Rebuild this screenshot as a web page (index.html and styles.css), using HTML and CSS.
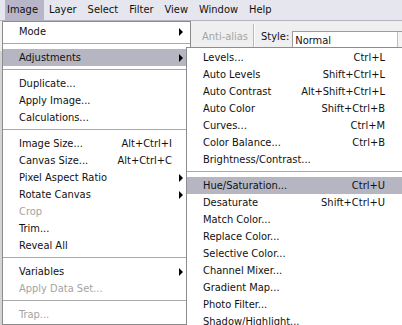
FILE: index.html
```html
<!DOCTYPE html>
<html lang="en">
<head>
    <meta charset="UTF-8">
    <meta name="viewport" content="width=device-width, initial-scale=1.0">
    <title>Image menu</title>
    <link rel="stylesheet" href="styles.css">
</head>
<body>
    <div class="app">
        <!-- top menu bar -->
        <div class="menubar">
            <span class="menubar-item is-open">Image</span>
            <span class="menubar-item">Layer</span>
            <span class="menubar-item">Select</span>
            <span class="menubar-item">Filter</span>
            <span class="menubar-item">View</span>
            <span class="menubar-item">Window</span>
            <span class="menubar-item">Help</span>
        </div>

        <!-- tool options bar (mostly hidden behind the menus) -->
        <div class="options">
            <span class="opt-disabled">Anti-alias</span>
            <span class="opt-sep"></span>
            <span class="opt-label">Style:</span>
            <div class="select">Normal<span class="select-btn"></span></div>
        </div>

        <!-- Image menu -->
        <ul class="menu menu-main">
            <li class="item"><span class="label">Mode</span><span class="sub"></span></li>
            <li class="sep"></li>
            <li class="item is-hover"><span class="label">Adjustments</span><span class="sub"></span></li>
            <li class="sep"></li>
            <li class="item"><span class="label">Duplicate...</span></li>
            <li class="item"><span class="label">Apply Image...</span></li>
            <li class="item"><span class="label">Calculations...</span></li>
            <li class="sep"></li>
            <li class="item"><span class="label">Image Size...</span><span class="key">Alt+Ctrl+I</span></li>
            <li class="item"><span class="label">Canvas Size...</span><span class="key">Alt+Ctrl+C</span></li>
            <li class="item"><span class="label">Pixel Aspect Ratio</span><span class="sub"></span></li>
            <li class="item"><span class="label">Rotate Canvas</span><span class="sub"></span></li>
            <li class="item is-disabled"><span class="label">Crop</span></li>
            <li class="item"><span class="label">Trim...</span></li>
            <li class="item"><span class="label">Reveal All</span></li>
            <li class="sep"></li>
            <li class="item"><span class="label">Variables</span><span class="sub"></span></li>
            <li class="item is-disabled"><span class="label">Apply Data Set...</span></li>
            <li class="sep"></li>
            <li class="item is-disabled"><span class="label">Trap...</span></li>
        </ul>

        <!-- Adjustments submenu -->
        <ul class="menu menu-sub">
            <li class="item"><span class="label">Levels...</span><span class="key">Ctrl+L</span></li>
            <li class="item"><span class="label">Auto Levels</span><span class="key">Shift+Ctrl+L</span></li>
            <li class="item"><span class="label">Auto Contrast</span><span class="key">Alt+Shift+Ctrl+L</span></li>
            <li class="item"><span class="label">Auto Color</span><span class="key">Shift+Ctrl+B</span></li>
            <li class="item"><span class="label">Curves...</span><span class="key">Ctrl+M</span></li>
            <li class="item"><span class="label">Color Balance...</span><span class="key">Ctrl+B</span></li>
            <li class="item"><span class="label">Brightness/Contrast...</span></li>
            <li class="sep"></li>
            <li class="item is-hover"><span class="label">Hue/Saturation...</span><span class="key">Ctrl+U</span></li>
            <li class="item"><span class="label">Desaturate</span><span class="key">Shift+Ctrl+U</span></li>
            <li class="item"><span class="label">Match Color...</span></li>
            <li class="item"><span class="label">Replace Color...</span></li>
            <li class="item"><span class="label">Selective Color...</span></li>
            <li class="item"><span class="label">Channel Mixer...</span></li>
            <li class="item"><span class="label">Gradient Map...</span></li>
            <li class="item"><span class="label">Photo Filter...</span></li>
            <li class="item"><span class="label">Shadow/Highlight...</span></li>
        </ul>
    </div>
</body>
</html>
```

FILE: styles.css
```css
body {
    margin: 0;
    background-color: #d4d4d4;
    font-family: "DejaVu Sans Condensed", "Liberation Sans", sans-serif;
    font-size: 11px;
    color: #111111;
}

.app {
    position: relative;
    width: 402px;
    height: 325px;
    overflow: hidden;
}

/* menu bar */
.menubar {
    display: flex;
    height: 20px;
    padding-left: 5px;
    background-color: #e6e6ee;
    border-bottom: 1px solid #b4b4bc;
}

.menubar-item {
    line-height: 20px;
    padding: 0 6px 0 2px;
    margin-right: 3px;
}

.menubar-item.is-open {
    background-color: #b6b6c8;
}

/* options bar */
.options {
    display: flex;
    align-items: center;
    height: 30px;
    padding-left: 202px;
    background-color: #efefef;
    white-space: nowrap;
}

.opt-disabled {
    color: #a4a4a4;
}

.opt-sep {
    flex: none;
    width: 1px;
    height: 24px;
    margin: 0 6px 0 5px;
    background-color: #b8b8b8;
    border-right: 1px solid #ffffff;
}

.opt-label {
    margin-right: 3px;
}

.select {
    position: relative;
    flex: none;
    width: 120px;
    height: 18px;
    margin-top: 10px;
    padding-left: 2px;
    line-height: 18px;
    background-color: #ffffff;
    border: 1px solid #9c9c9c;
}

.select-btn {
    position: absolute;
    left: 104px;
    top: 0;
    width: 12px;
    height: 18px;
    border-left: 1px solid #c0c0c0;
    background-color: #f4f4f4;
}

/* dropdown menus */
.menu {
    position: absolute;
    list-style: none;
    margin: 0;
    padding: 1px 0;
    background-color: #ffffff;
    border: 1px solid #8c8c8c;
}

.menu-main {
    left: 2px;
    top: 21px;
    width: 187px;
}

.menu-sub {
    left: 186px;
    top: 47px;
    width: 225px;
}

.item {
    position: relative;
    display: flex;
    height: 17px;
    line-height: 17px;
    padding: 0 18px 0 16px;
    white-space: nowrap;
}

.menu-sub .item {
    padding-right: 27px;
}

.label {
    flex: 1;
}

.key {
    text-align: right;
}

/* submenu arrow */
.sub {
    position: absolute;
    right: 7px;
    top: 5px;
    border-left: 4px solid #000000;
    border-top: 4px solid transparent;
    border-bottom: 4px solid transparent;
}

.item.is-hover {
    background-color: #b6b6c2;
}

.item.is-disabled {
    color: #a4a4a4;
}

.sep {
    height: 1px;
    margin: 3px 0 4px;
    background-color: #a8a8a8;
    border-bottom: 1px solid #ffffff;
}
```
